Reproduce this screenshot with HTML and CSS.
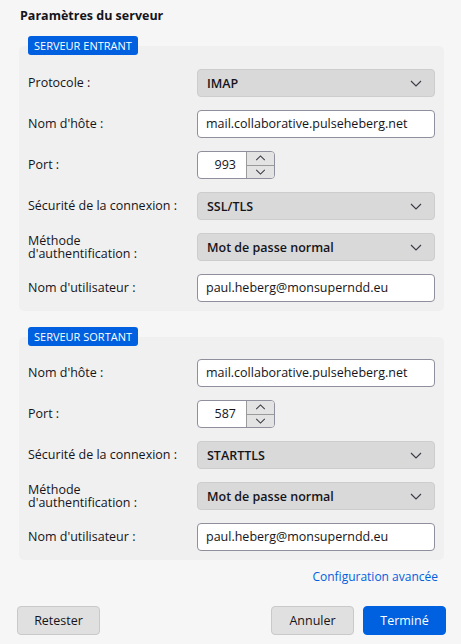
FILE: index.html
```html
<!DOCTYPE html>
<html lang="fr">
<head>
<meta charset="utf-8">
<title>Paramètres du serveur</title>
<link rel="stylesheet" href="styles.css">
</head>
<body>
<div class="page">
  <h1 class="title">Paramètres du serveur</h1>

  <section class="group">
    <div class="badge">SERVEUR ENTRANT</div>
    <div class="card">
      <label class="lbl">Protocole :</label>
      <div class="select"><span>IMAP</span><svg class="chev" viewBox="0 0 12 7" width="12" height="7"><path d="M1 1l5 5 5-5" fill="none" stroke="#3a3944" stroke-width="1.1"/></svg></div>

      <label class="lbl">Nom d'hôte :</label>
      <div class="input">mail.collaborative.pulseheberg.net</div>

      <label class="lbl">Port :</label>
      <div class="spin"><span class="spin-val">993</span><div class="spin-btns"><div class="spin-btn"><svg viewBox="0 0 12 7" width="11" height="6"><path d="M1 6l5-5 5 5" fill="none" stroke="#3a3944" stroke-width="1.2"/></svg></div><div class="spin-btn"><svg viewBox="0 0 12 7" width="11" height="6"><path d="M1 1l5 5 5-5" fill="none" stroke="#3a3944" stroke-width="1.2"/></svg></div></div></div>

      <label class="lbl">Sécurité de la connexion :</label>
      <div class="select"><span>SSL/TLS</span><svg class="chev" viewBox="0 0 12 7" width="12" height="7"><path d="M1 1l5 5 5-5" fill="none" stroke="#3a3944" stroke-width="1.1"/></svg></div>

      <label class="lbl lbl-two">Méthode<br>d'authentification :</label>
      <div class="select"><span>Mot de passe normal</span><svg class="chev" viewBox="0 0 12 7" width="12" height="7"><path d="M1 1l5 5 5-5" fill="none" stroke="#3a3944" stroke-width="1.1"/></svg></div>

      <label class="lbl">Nom d'utilisateur :</label>
      <div class="input">paul.heberg@monsuperndd.eu</div>
    </div>
  </section>

  <section class="group group-second">
    <div class="badge">SERVEUR SORTANT</div>
    <div class="card card-second">
      <label class="lbl">Nom d'hôte :</label>
      <div class="input">mail.collaborative.pulseheberg.net</div>

      <label class="lbl">Port :</label>
      <div class="spin"><span class="spin-val">587</span><div class="spin-btns"><div class="spin-btn"><svg viewBox="0 0 12 7" width="11" height="6"><path d="M1 6l5-5 5 5" fill="none" stroke="#3a3944" stroke-width="1.2"/></svg></div><div class="spin-btn"><svg viewBox="0 0 12 7" width="11" height="6"><path d="M1 1l5 5 5-5" fill="none" stroke="#3a3944" stroke-width="1.2"/></svg></div></div></div>

      <label class="lbl">Sécurité de la connexion :</label>
      <div class="select"><span>STARTTLS</span><svg class="chev" viewBox="0 0 12 7" width="12" height="7"><path d="M1 1l5 5 5-5" fill="none" stroke="#3a3944" stroke-width="1.1"/></svg></div>

      <label class="lbl lbl-two">Méthode<br>d'authentification :</label>
      <div class="select"><span>Mot de passe normal</span><svg class="chev" viewBox="0 0 12 7" width="12" height="7"><path d="M1 1l5 5 5-5" fill="none" stroke="#3a3944" stroke-width="1.1"/></svg></div>

      <label class="lbl">Nom d'utilisateur :</label>
      <div class="input">paul.heberg@monsuperndd.eu</div>
    </div>
  </section>

  <div class="link-row"><a class="link" href="#">Configuration avancée</a></div>

  <div class="buttons">
    <button class="btn">Retester</button>
    <div class="spacer"></div>
    <button class="btn">Annuler</button>
    <button class="btn btn-primary">Terminé</button>
  </div>
</div>
</body>
</html>
```

FILE: styles.css
```css
* { box-sizing: border-box; }
html, body {
  margin: 0;
  padding: 0;
  background: #f6f6f6;
}
body {
  font-family: "Open Sans", "Noto Sans", sans-serif;
  font-size: 12.5px;
  color: #15141a;
  width: 461px;
  height: 644px;
  overflow: hidden;
}
.page {
  padding: 0 15px 0 17px;
  display: flex;
  flex-direction: column;
}
.title {
  margin: 6px 0 0 3px;
  font-size: 12.5px;
  font-weight: 700;
  line-height: 20px;
}
.group {
  display: flex;
  flex-direction: column;
  margin: 10px 2px 0 2px;
}
.group-second { margin-top: 16px; }
.badge {
  align-self: flex-start;
  position: relative;
  z-index: 1;
  margin-left: 9px;
  margin-bottom: -9px;
  height: 19px;
  line-height: 19px;
  padding: 0 6px;
  background: #0060df;
  color: #fff;
  font-size: 11px;
  font-weight: 500;
  border-radius: 3px;
}
.card {
  background: #f0f0f0;
  border-radius: 5px;
  padding: 23px 9px 9px 9px;
  display: grid;
  grid-template-columns: 169px 1fr;
  grid-auto-rows: 28px;
  row-gap: 13px;
  align-items: center;
}
.card-second { padding-top: 22px; }
.lbl {
  line-height: 16px;
}
.lbl-two {
  line-height: 13px;
}
.input {
  height: 28px;
  background: #fff;
  border: 1px solid #8f8f9d;
  border-radius: 4px;
  padding: 0 8px;
  line-height: 26px;
  white-space: nowrap;
  overflow: hidden;
}
.select {
  height: 28px;
  background: #d9d9d9;
  border: 1px solid #cdcdcd;
  border-radius: 4px;
  padding: 0 12px 0 9px;
  display: flex;
  align-items: center;
  justify-content: space-between;
  font-weight: 600;
}
.chev { display: block; }
.spin {
  width: 78px;
  height: 28px;
  background: #fff;
  border: 1px solid #8f8f9d;
  border-radius: 4px;
  display: flex;
  align-items: stretch;
  overflow: hidden;
}
.spin-val {
  flex: 1;
  text-align: right;
  padding-right: 10px;
  line-height: 26px;
}
.spin-btns {
  width: 28px;
  display: flex;
  flex-direction: column;
  border-left: 1px solid #9a9a9a;
}
.spin-btn {
  flex: 1;
  background: #e3e3e3;
  display: flex;
  align-items: center;
  justify-content: center;
}
.spin-btn + .spin-btn { border-top: 1px solid #9a9a9a; }
.spin-btn svg { display: block; }
.link-row {
  display: flex;
  justify-content: flex-end;
  margin-top: 7px;
  padding-right: 8px;
  line-height: 20px;
}
.link {
  color: #0060df;
  text-decoration: none;
  font-weight: 400;
  font-size: 12px;
}
.buttons {
  display: flex;
  gap: 9px;
  margin-top: 19px;
}
.spacer { flex: 1; }
.btn {
  width: 83px;
  height: 29px;
  font-family: inherit;
  font-size: 12.5px;
  color: #15141a;
  background: #e0e0e0;
  border: 1px solid #c9c9c9;
  border-radius: 4px;
  padding: 0;
}
.btn-primary {
  background: #0061e0;
  border-color: #0061e0;
  color: #fff;
}
```
